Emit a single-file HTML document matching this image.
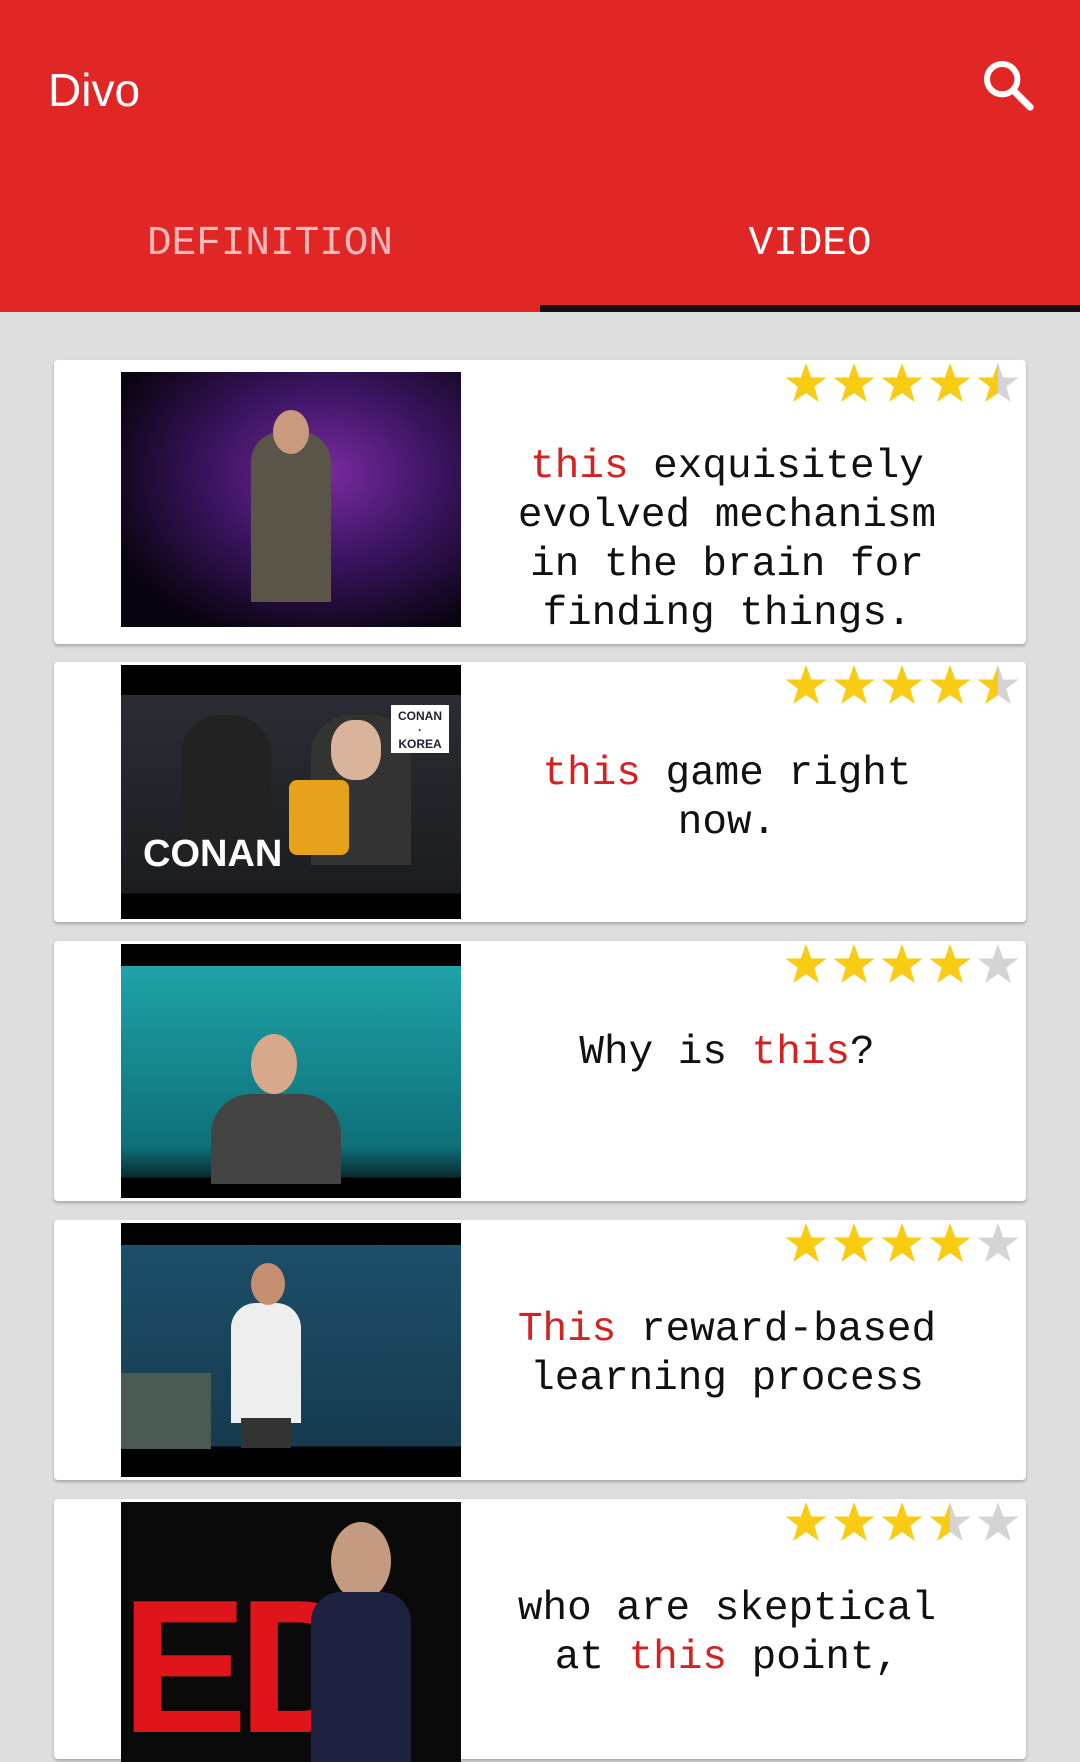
<!DOCTYPE html><html><head><meta charset="utf-8"><style>
body{margin:0;width:1080px;height:1728px;background:#dedede;overflow:hidden;font-family:"Liberation Mono",monospace;position:relative}
.hdr{position:absolute;left:0;top:0;width:1080px;height:312px;background:#e12726}
.title{position:absolute;left:48px;top:63px;font:46px "Liberation Sans",sans-serif;color:#fff}
.tab{position:absolute;top:221px;font-size:41px;color:#f6b9b7;width:540px;text-align:center}
.ind{position:absolute;left:540px;top:305px;width:540px;height:7px;background:#111}
.card{position:absolute;left:54px;width:972px;background:#fff;border-radius:4px;box-shadow:0 2px 3px rgba(0,0,0,.25)}
.th{position:absolute;left:67px;top:12px;width:340px;height:254px;background:#000;overflow:hidden}
.tx{position:absolute;left:407px;width:532px;text-align:center;font-size:41px;line-height:49px;color:#111}
.r{color:#d32220}
.st{position:absolute;left:731px;top:2px}
</style></head><body>
<div class="hdr"><div class="title">Divo</div>
<svg style="position:absolute;left:980px;top:57px" width="56" height="56" viewBox="0 0 24 24"><circle cx="9.5" cy="9.5" r="6.5" fill="none" stroke="#fff" stroke-width="2.6"/><path d="M14.5 14.5L21.5 21.5" stroke="#fff" stroke-width="3" stroke-linecap="round"/></svg>
<div class="tab" style="left:0">DEFINITION</div><div class="tab" style="left:540px;color:#fff">VIDEO</div><div class="ind"></div></div>
<svg width="0" height="0" style="position:absolute"><defs>
<path id="s" d="M21 1L26.2 15.5H41.5L29.3 24.7L33.8 40L21 31L8.2 40L12.7 24.7L0.5 15.5H15.8Z"/>
<linearGradient id="h"><stop offset="50%" stop-color="#f9cb12"/><stop offset="50%" stop-color="#d4d4d4"/></linearGradient>
</defs></svg>

<div class="card" style="top:360px;height:284px">
<div class="th" style="height:255px;background:radial-gradient(ellipse at 60% 40%,#7a2aa0 0%,#3a1460 40%,#0a0410 80%);"><div style="position:absolute;left:130px;top:60px;width:80px;height:170px;background:#5b5448;border-radius:30px 30px 0 0"></div><div style="position:absolute;left:152px;top:38px;width:36px;height:44px;background:#c99a7e;border-radius:50%"></div></div>
<svg class="st" width="240" height="44"><use href="#s" fill="#f9cb12"/><use href="#s" x="48" fill="#f9cb12"/><use href="#s" x="96" fill="#f9cb12"/><use href="#s" x="144" fill="#f9cb12"/><use href="#s" x="192" fill="url(#h)"/></svg>
<div class="tx" style="top:83px"><span class="r">this</span> exquisitely<br>evolved mechanism<br>in the brain for<br>finding things.</div></div>

<div class="card" style="top:662px;height:260px">
<div class="th" style="top:3px;background:linear-gradient(#000 0 30px,#2a2d33 30px,#1a1c20 90%,#000 90%)"><div style="position:absolute;left:60px;top:50px;width:90px;height:150px;background:#222;border-radius:40px 40px 0 0"></div><div style="position:absolute;left:190px;top:50px;width:100px;height:150px;background:#333;border-radius:40px 40px 0 0"></div><div style="position:absolute;left:210px;top:55px;width:50px;height:60px;background:#d9b39a;border-radius:45%"></div><div style="position:absolute;left:168px;top:115px;width:60px;height:75px;background:#e6a21c;border-radius:8px"></div><div style="position:absolute;left:22px;top:168px;font:bold 38px 'Liberation Sans',sans-serif;color:#fff">CONAN</div><div style="position:absolute;left:270px;top:40px;width:58px;height:44px;background:#fff;font:bold 12px 'Liberation Sans';color:#223;text-align:center;line-height:14px;padding-top:4px">CONAN<br>·<br>KOREA</div></div>
<svg class="st" width="240" height="44"><use href="#s" fill="#f9cb12"/><use href="#s" x="48" fill="#f9cb12"/><use href="#s" x="96" fill="#f9cb12"/><use href="#s" x="144" fill="#f9cb12"/><use href="#s" x="192" fill="url(#h)"/></svg>
<div class="tx" style="top:88px"><span class="r">this</span> game right<br>now.</div></div>

<div class="card" style="top:941px;height:260px">
<div class="th" style="top:3px;background:linear-gradient(#000 0 22px,#1fa3a8 22px,#0e6f78 80%,#082a30 92%,#000 92%)"><div style="position:absolute;left:90px;top:150px;width:130px;height:90px;background:#444;border-radius:40px 40px 0 0"></div><div style="position:absolute;left:130px;top:90px;width:46px;height:60px;background:#d7a88a;border-radius:50%"></div></div>
<svg class="st" width="240" height="44"><use href="#s" fill="#f9cb12"/><use href="#s" x="48" fill="#f9cb12"/><use href="#s" x="96" fill="#f9cb12"/><use href="#s" x="144" fill="#f9cb12"/><use href="#s" x="192" fill="#d4d4d4"/></svg>
<div class="tx" style="top:88px">Why is <span class="r">this</span>?</div></div>

<div class="card" style="top:1220px;height:260px">
<div class="th" style="top:3px;background:linear-gradient(#000 0 22px,#1c4f6a 22px,#163a4e 88%,#000 88%)"><div style="position:absolute;left:0;top:150px;width:90px;height:76px;background:#4a5a52"></div><div style="position:absolute;left:110px;top:80px;width:70px;height:120px;background:#eee;border-radius:25px 25px 0 0"></div><div style="position:absolute;left:130px;top:40px;width:34px;height:42px;background:#c58f70;border-radius:50%"></div><div style="position:absolute;left:120px;top:195px;width:50px;height:30px;background:#333"></div></div>
<svg class="st" width="240" height="44"><use href="#s" fill="#f9cb12"/><use href="#s" x="48" fill="#f9cb12"/><use href="#s" x="96" fill="#f9cb12"/><use href="#s" x="144" fill="#f9cb12"/><use href="#s" x="192" fill="#d4d4d4"/></svg>
<div class="tx" style="top:86px"><span class="r">This</span> reward-based<br>learning process</div></div>

<div class="card" style="top:1499px;height:260px">
<div class="th" style="top:3px;height:260px;background:#0a0a0a"><div style="position:absolute;left:0;top:70px;font:bold 190px 'Liberation Sans',sans-serif;color:#e0141b;letter-spacing:-10px;line-height:190px">ED</div><div style="position:absolute;left:210px;top:20px;width:60px;height:78px;background:#c49a80;border-radius:50%"></div><div style="position:absolute;left:190px;top:90px;width:100px;height:170px;background:#1e2140;border-radius:30px 30px 0 0"></div></div>
<svg class="st" width="240" height="44"><use href="#s" fill="#f9cb12"/><use href="#s" x="48" fill="#f9cb12"/><use href="#s" x="96" fill="#f9cb12"/><use href="#s" x="144" fill="url(#h)"/><use href="#s" x="192" fill="#d4d4d4"/></svg>
<div class="tx" style="top:86px">who are skeptical<br>at <span class="r">this</span> point,</div></div>
</body></html>
